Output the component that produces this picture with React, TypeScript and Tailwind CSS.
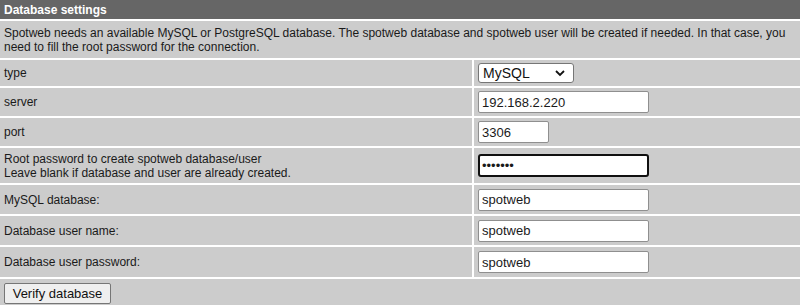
import React from 'react'

type Row = {
  label: React.ReactNode
  field: React.ReactNode
  h: string
}

const inputBase =
  "h-[22px] bg-white border border-[#8f8f8f] rounded-[2px] px-[3px] text-[13px] text-[#1a1a1a] font-['Liberation_Sans',Arial,sans-serif] outline-none"

export default function App() {
  const rows: Row[] = [
    {
      label: 'type',
      h: 'h-[26px]',
      field: (
        <div className="w-[96px] h-[20px] bg-white border border-[#767676] rounded-[3px] flex items-center justify-between pl-[4px] pr-[8px] text-[14px] text-[#111]">
          <span>MySQL</span>
          <svg width="10" height="7" viewBox="0 0 10 7">
            <path d="M1 1 L5 5 L9 1" fill="none" stroke="#111" strokeWidth="1.8" />
          </svg>
        </div>
      ),
    },
    {
      label: 'server',
      h: 'h-[28px]',
      field: <input className={`${inputBase} w-[171px]`} defaultValue="192.168.2.220" />,
    },
    {
      label: 'port',
      h: 'h-[28px]',
      field: <input className={`${inputBase} w-[71px]`} defaultValue="3306" />,
    },
    {
      label: (
        <>
          Root password to create spotweb database/user
          <br />
          Leave blank if database and user are already created.
        </>
      ),
      h: 'h-[35px]',
      field: (
        <input
          type="password"
          className="h-[23px] w-[171px] bg-white border-2 border-[#101010] rounded-[3px] px-[2px] text-[13px] outline-none"
          defaultValue="spotweb"
        />
      ),
    },
    {
      label: 'MySQL database:',
      h: 'h-[29px]',
      field: <input className={`${inputBase} w-[171px]`} defaultValue="spotweb" />,
    },
    {
      label: 'Database user name:',
      h: 'h-[29px]',
      field: <input className={`${inputBase} w-[171px]`} defaultValue="spotweb" />,
    },
    {
      label: 'Database user password:',
      h: 'h-[30px]',
      field: <input className={`${inputBase} w-[171px]`} defaultValue="spotweb" />,
    },
  ]

  return (
    <div className="w-[800px] h-[305px] overflow-hidden bg-white font-['Liberation_Sans',Arial,sans-serif] text-[12px] leading-[14px] text-[#1a1a1a]">
      <div className="h-[19px] bg-[#666666] text-white font-bold px-[4px] flex items-center">
        Database settings
      </div>

      <div className="flex flex-col gap-[2px] pt-[2px]">
        <div className="h-[37px] bg-[#cccccc] px-[4px] flex items-center">
          <p>
            Spotweb needs an available MySQL or PostgreSQL database. The spotweb database and spotweb user will be
            created if needed. In that case, you need to fill the root password for the connection.
          </p>
        </div>

        {rows.map((row, i) => (
          <div key={i} className={`grid grid-cols-[472px_1fr] gap-x-[2px] ${row.h}`}>
            <div className="bg-[#cccccc] px-[4px] flex items-center">
              <p>{row.label}</p>
            </div>
            <div className="bg-[#cccccc] px-[4px] flex items-center">{row.field}</div>
          </div>
        ))}

        <div className="bg-[#cccccc] h-[40px] px-[4px] pt-[4px]">
          <button className="h-[21px] w-[107px] bg-[#efefef] border border-[#767676] rounded-[2px] text-[13px] text-[#111] leading-none">
            Verify database
          </button>
        </div>
      </div>
    </div>
  )
}
